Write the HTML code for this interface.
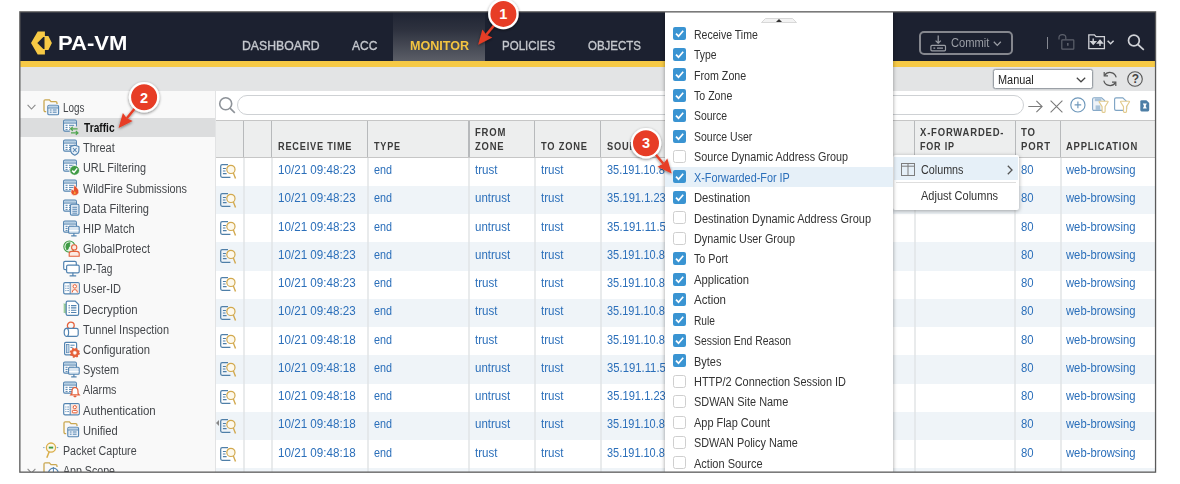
<!DOCTYPE html>
<html lang="en"><head><meta charset="utf-8"><title>PA-VM Monitor Logs</title>
<style>
html,body{margin:0;padding:0;background:#fff;}
body{width:1180px;height:484px;overflow:hidden;position:relative;font-family:"Liberation Sans",sans-serif;}
.t{position:absolute;white-space:nowrap;}
.b{position:absolute;}
svg{position:absolute;overflow:visible;}
#clip{position:absolute;left:0;top:0;width:1180px;height:484px;clip-path:inset(12px 24px 12px 20px);}
#over{position:absolute;left:0;top:0;width:1180px;height:484px;}
</style></head><body>
<div id="clip">
<div class="b" style="left:20px;top:12px;width:1136px;height:49px;background:#1c2130;"></div>
<div class="b" style="left:393px;top:12px;width:92px;height:49px;background:linear-gradient(#1f2433 0%,#2d313e 35%,#5b5e67 100%);"></div>
<div class="b" style="left:20px;top:60.9px;width:1136px;height:6.6px;background:#f6c945;"></div>
<div class="b" style="left:20px;top:67.4px;width:1136px;height:23.6px;background:#e3e4e5;"></div>
<svg style="left:31.4px;top:30.8px" width="21" height="24" viewBox="0 0 21 23.2"><path d="M6.7 0 H13.9 V4.65 H17.4 L20.9 11.6 L17.4 18.55 H13.9 V23.2 H6.7 L0 11.6 Z" fill="#f6c945"/><path d="M6.3 11.6 L12.3 5.6 H13.5 V17.6 H12.3 Z" fill="#1c2130"/></svg>
<div class="t" style="left:57.6px;top:29.4px;font-size:19.4px;line-height:29px;color:#fff;font-weight:bold;transform:scaleX(1.1364);transform-origin:0 50%;">PA-VM</div>
<div class="t" style="left:242.0px;top:36.4px;font-size:13px;line-height:20px;color:#c5c8ce;-webkit-text-stroke:0.35px #c5c8ce;transform:scaleX(0.9423);transform-origin:0 50%;">DASHBOARD</div>
<div class="t" style="left:351.8px;top:36.4px;font-size:13px;line-height:20px;color:#c5c8ce;-webkit-text-stroke:0.35px #c5c8ce;transform:scaleX(0.9254);transform-origin:0 50%;">ACC</div>
<div class="t" style="left:409.8px;top:36.4px;font-size:13px;line-height:20px;color:#f3c440;font-weight:bold;transform:scaleX(0.9682);transform-origin:0 50%;">MONITOR</div>
<div class="t" style="left:501.7px;top:36.4px;font-size:13px;line-height:20px;color:#c5c8ce;-webkit-text-stroke:0.35px #c5c8ce;transform:scaleX(0.8872);transform-origin:0 50%;">POLICIES</div>
<div class="t" style="left:587.6px;top:36.4px;font-size:13px;line-height:20px;color:#c5c8ce;-webkit-text-stroke:0.35px #c5c8ce;transform:scaleX(0.8840);transform-origin:0 50%;">OBJECTS</div>
<div class="b" style="left:919px;top:31.3px;width:93.5px;height:23.5px;border:2px solid #85878e;border-radius:5px;box-sizing:border-box;"></div>
<svg style="left:930px;top:35px" width="17" height="17" viewBox="0 0 17 17" fill="none" stroke="#9b9ea5" stroke-width="1.2"><path d="M8.2 0.5 V8 M5.6 5.6 L8.2 8.2 L10.8 5.6"/><rect x="0.9" y="10.4" width="14.6" height="5.4" rx="1"/><path d="M3.4 13.1 H5.2 M7 13.1 H13"/></svg>
<div class="t" style="left:950.6px;top:34.3px;font-size:12px;line-height:18px;color:#9b9ea5;transform:scaleX(0.9291);transform-origin:0 50%;">Commit</div>
<svg style="left:993px;top:41px" width="9" height="6" viewBox="0 0 9 6" fill="none" stroke="#9b9ea5" stroke-width="1.3"><path d="M0.8 0.8 L4.3 4.4 L7.8 0.8"/></svg>
<div class="b" style="left:1047.2px;top:37.2px;width:1.3px;height:12px;background:#868992;"></div>
<svg style="left:1058px;top:34px" width="17" height="16" viewBox="0 0 17 16" fill="none" stroke="#5d616c" stroke-width="1.2"><path d="M1 5.4 V3.6 Q1 0.7 4.4 0.7 Q7.8 0.7 7.8 3.6 V5.6"/><rect x="3.8" y="5.8" width="12" height="9.4" rx="0.6"/><path d="M9.8 9 V11.8" stroke-width="1.6"/></svg>
<svg style="left:1088px;top:34px" width="27" height="16" viewBox="0 0 27 16" fill="none"><path d="M0.8 0.8 H6.4 L8 2.6 H16.4 V14.6 H0.8 Z" stroke="#d0d2d7" stroke-width="1.3"/><path d="M5.2 4.6 V10 M2.9 7.6 L5.2 10.2 L7.5 7.6 Z M12 12 V6.6 M9.7 9 L12 6.4 L14.3 9 Z" stroke="#d0d2d7" stroke-width="1.4" fill="#d0d2d7"/><path d="M19.6 6.8 L22.6 9.8 L25.6 6.8" stroke="#d0d2d7" stroke-width="1.5"/></svg>
<svg style="left:1127px;top:34px" width="18" height="17" viewBox="0 0 18 17" fill="none" stroke="#d0d2d7" stroke-width="1.7"><circle cx="6.9" cy="6.5" r="5.4"/><path d="M10.9 10.5 L16.8 15.8"/></svg>
<div class="b" style="left:992.6px;top:69.4px;width:100px;height:19.8px;border:1px solid #9ba0a6;border-radius:2.5px;box-sizing:border-box;background:#fff;box-shadow:0 0 0 0.5px #c2c6ca;"></div>
<div class="t" style="left:997.7px;top:70.5px;font-size:12px;line-height:18px;color:#222;transform:scaleX(0.9096);transform-origin:0 50%;">Manual</div>
<svg style="left:1076px;top:77.3px" width="10" height="6" viewBox="0 0 10 6" fill="none" stroke="#444" stroke-width="1.2"><path d="M0.8 0.8 L5 4.8 L9.2 0.8"/></svg>
<svg style="left:1101.5px;top:71px" width="16" height="16" viewBox="0 0 16 16" fill="none" stroke="#555" stroke-width="1.2"><path d="M14.2 6.4 A6.4 6.4 0 0 0 2.6 4.4 M1.8 9.6 A6.4 6.4 0 0 0 13.4 11.6"/><path d="M2.2 1 V4.8 H6 M13.8 15 V11.2 H10" /></svg>
<svg style="left:1127px;top:70.6px" width="16" height="16" viewBox="0 0 16 16" fill="none" stroke="#555" stroke-width="1.1"><circle cx="8" cy="8" r="7.3"/></svg>
<div class="t" style="left:1131.8px;top:70.2px;font-size:12px;line-height:18px;color:#444;font-weight:bold;">?</div>
<div class="b" style="left:20px;top:91px;width:194.6px;height:381px;background:#f9f9f9;"></div>
<div class="b" style="left:214.6px;top:91px;width:1.4px;height:381px;background:#e2e3e4;"></div>
<div class="b" style="left:20px;top:117.8px;width:194.6px;height:19px;background:#dcddde;"></div>
<svg style="left:43.0px;top:98.6px" width="17" height="17" viewBox="0 0 17 17"><path d="M3.2 12.6 H2.4 Q1 12.6 1 11.2 V2.2 Q1 0.8 2.4 0.8 H6.4 L8 2.6 H12.6 Q14 2.6 14 4 V5" fill="none" stroke="#c9a750" stroke-width="1.3"/><rect x="4.8" y="6.2" width="10.8" height="9.6" rx="1.4" fill="#eaf1f8" stroke="#5283b0" stroke-width="1.1"/><rect x="5.4" y="6.8" width="9.6" height="2" fill="#bcd3e7"/><path d="M4.8 9 H15.6" stroke="#5283b0" stroke-width="0.9"/><path d="M6.8 11 H8.6 M9.8 11 H13.6 M6.8 13.2 H8.6 M9.8 13.2 H13.6" stroke="#5283b0" stroke-width="1"/></svg>
<div class="t" style="left:63.4px;top:98.9px;font-size:12px;line-height:18px;color:#44474b;transform:scaleX(0.8224);transform-origin:0 50%;">Logs</div>
<svg style="left:27px;top:104.4px" width="9" height="6" viewBox="0 0 9 6" fill="none" stroke="#8a8a8a" stroke-width="1.1"><path d="M0.6 0.8 L4.5 5 L8.4 0.8"/></svg>
<svg style="left:62.6px;top:118.8px" width="17" height="17" viewBox="0 0 17 17"><rect x="0.6" y="1.1" width="12.8" height="11" rx="1.3" fill="#fff" stroke="#5283b0" stroke-width="1.1"/><rect x="1.2" y="1.7" width="11.6" height="2" fill="#b4cde2"/><path d="M0.6 4.1 H13.4" stroke="#5283b0" stroke-width="1"/><path d="M2.5 6.3 H4.6 M6 6.3 H11.3 M2.5 8.4 H4.6 M6 8.4 H11.3 M2.5 10.4 H4.6 M6 10.4 H9.5" stroke="#5283b0" stroke-width="1"/><rect x="6.8" y="7.4" width="9.5" height="9" fill="#dcdcdc"/><path d="M14.6 9.8 H7.8 M9.8 7.9 L7.6 9.8 L9.8 11.7 M8 13.9 H14.8 M12.8 12 L15 13.9 L12.8 15.8" stroke="#4fa54f" stroke-width="1.15" fill="none"/></svg>
<div class="t" style="left:83.6px;top:119.1px;font-size:12px;line-height:18px;color:#111;font-weight:bold;transform:scaleX(0.8497);transform-origin:0 50%;">Traffic</div>
<svg style="left:62.6px;top:138.9px" width="17" height="17" viewBox="0 0 17 17"><rect x="0.6" y="1.1" width="12.8" height="11" rx="1.3" fill="#fff" stroke="#5283b0" stroke-width="1.1"/><rect x="1.2" y="1.7" width="11.6" height="2" fill="#b4cde2"/><path d="M0.6 4.1 H13.4" stroke="#5283b0" stroke-width="1"/><path d="M2.5 6.3 H4.6 M6 6.3 H11.3 M2.5 8.4 H4.6 M6 8.4 H11.3 M2.5 10.4 H4.6 M6 10.4 H9.5" stroke="#5283b0" stroke-width="1"/><path d="M7.7 7.6 L11.8 6.2 L15.9 7.6 V11.2 Q15.9 14.4 11.8 16.2 Q7.7 14.4 7.7 11.2 Z" fill="#e9f1f8" stroke="#5283b0" stroke-width="1.1"/><path d="M10 9 L13.6 13 M13.6 9 L10 13" stroke="#5283b0" stroke-width="1.1"/></svg>
<div class="t" style="left:83.2px;top:139.2px;font-size:12px;line-height:18px;color:#44474b;transform:scaleX(0.9169);transform-origin:0 50%;">Threat</div>
<svg style="left:62.6px;top:159.1px" width="17" height="17" viewBox="0 0 17 17"><rect x="0.6" y="1.1" width="12.8" height="11" rx="1.3" fill="#fff" stroke="#5283b0" stroke-width="1.1"/><rect x="1.2" y="1.7" width="11.6" height="2" fill="#b4cde2"/><path d="M0.6 4.1 H13.4" stroke="#5283b0" stroke-width="1"/><path d="M2.5 6.3 H4.6 M6 6.3 H11.3 M2.5 8.4 H4.6 M6 8.4 H11.3 M2.5 10.4 H4.6 M6 10.4 H9.5" stroke="#5283b0" stroke-width="1"/><circle cx="11.6" cy="11.4" r="4.9" fill="#3f9b45" stroke="#fff" stroke-width="0.8"/><path d="M9.2 11.6 L11 13.4 L14.2 9.4" stroke="#fff" stroke-width="1.5" fill="none"/></svg>
<div class="t" style="left:83.2px;top:159.4px;font-size:12px;line-height:18px;color:#44474b;transform:scaleX(0.9055);transform-origin:0 50%;">URL Filtering</div>
<svg style="left:62.6px;top:179.3px" width="17" height="17" viewBox="0 0 17 17"><rect x="0.6" y="1.1" width="12.8" height="11" rx="1.3" fill="#fff" stroke="#5283b0" stroke-width="1.1"/><rect x="1.2" y="1.7" width="11.6" height="2" fill="#b4cde2"/><path d="M0.6 4.1 H13.4" stroke="#5283b0" stroke-width="1"/><path d="M2.5 6.3 H4.6 M6 6.3 H11.3 M2.5 8.4 H4.6 M6 8.4 H11.3 M2.5 10.4 H4.6 M6 10.4 H9.5" stroke="#5283b0" stroke-width="1"/><path d="M11.8 5.2 Q12.4 7.6 14.4 9.2 Q16.4 11.2 15.8 13.6 Q14.8 16.5 11.8 16.6 Q8.4 16.5 7.9 13.4 Q7.7 11.6 9.2 9.8 Q9.5 11.2 10.4 11.4 Q10.2 8 11.8 5.2 Z" fill="#e8512e" stroke="#fff" stroke-width="0.6"/><path d="M11.7 12 Q13.2 13.4 12.6 14.8 Q11.7 15.8 10.8 14.8 Q10.4 13.4 11.7 12 Z" fill="#f7a23b"/></svg>
<div class="t" style="left:83.2px;top:179.6px;font-size:12px;line-height:18px;color:#44474b;transform:scaleX(0.9015);transform-origin:0 50%;">WildFire Submissions</div>
<svg style="left:62.6px;top:199.4px" width="17" height="17" viewBox="0 0 17 17"><rect x="0.6" y="1.1" width="12.8" height="11" rx="1.3" fill="#fff" stroke="#5283b0" stroke-width="1.1"/><rect x="1.2" y="1.7" width="11.6" height="2" fill="#b4cde2"/><path d="M0.6 4.1 H13.4" stroke="#5283b0" stroke-width="1"/><path d="M2.5 6.3 H4.6 M6 6.3 H11.3 M2.5 8.4 H4.6 M6 8.4 H11.3 M2.5 10.4 H4.6 M6 10.4 H9.5" stroke="#5283b0" stroke-width="1"/><rect x="7.4" y="5.3" width="8.6" height="10.8" rx="1.4" fill="#dbe7f2" stroke="#5283b0" stroke-width="1.1"/><path d="M9.4 8.3 H14 M9.4 10.3 H14 M9.4 12.3 H14 M9.4 14.2 H14" stroke="#5283b0" stroke-width="0.9"/></svg>
<div class="t" style="left:83.2px;top:199.8px;font-size:12px;line-height:18px;color:#44474b;transform:scaleX(0.9249);transform-origin:0 50%;">Data Filtering</div>
<svg style="left:62.6px;top:219.6px" width="17" height="17" viewBox="0 0 17 17"><rect x="0.6" y="1.1" width="12.8" height="11" rx="1.3" fill="#fff" stroke="#5283b0" stroke-width="1.1"/><rect x="1.2" y="1.7" width="11.6" height="2" fill="#b4cde2"/><path d="M0.6 4.1 H13.4" stroke="#5283b0" stroke-width="1"/><path d="M2.5 6.3 H4.6 M6 6.3 H11.3 M2.5 8.4 H4.6 M6 8.4 H11.3 M2.5 10.4 H4.6 M6 10.4 H9.5" stroke="#5283b0" stroke-width="1"/><rect x="5.6" y="6.2" width="10.6" height="7" rx="1" fill="#dbe7f2" stroke="#5283b0" stroke-width="1.1"/><path d="M10.9 13.2 V15.4 M8.2 15.8 H13.6" stroke="#5283b0" stroke-width="1.2"/><path d="M6.2 10.6 H15.6" stroke="#fff" stroke-width="1"/></svg>
<div class="t" style="left:83.2px;top:219.9px;font-size:12px;line-height:18px;color:#44474b;transform:scaleX(0.9247);transform-origin:0 50%;">HIP Match</div>
<svg style="left:62.6px;top:239.8px" width="17" height="17" viewBox="0 0 17 17"><circle cx="6.4" cy="6.6" r="5.6" fill="#eaf4ea" stroke="#3f9b45" stroke-width="1.1"/><path d="M3 4 Q5 2 7.6 2.4 Q6.4 4.6 7.4 6 Q5.6 7 5.6 9 Q4.6 10.6 3.4 10 Q1.6 7 3 4 Z" fill="#3f9b45"/><circle cx="11.2" cy="7.4" r="2.6" fill="#fbe9e2" stroke="#e5603a" stroke-width="1.1"/><path d="M6.2 16.2 V13.6 Q6.2 11.4 8.6 11.4 H13.8 Q16.2 11.4 16.2 13.6 V16.2 Z" fill="#fbe9e2" stroke="#e5603a" stroke-width="1.1"/></svg>
<div class="t" style="left:83.2px;top:240.1px;font-size:12px;line-height:18px;color:#44474b;transform:scaleX(0.9216);transform-origin:0 50%;">GlobalProtect</div>
<svg style="left:62.6px;top:260.0px" width="17" height="17" viewBox="0 0 17 17"><rect x="0.7" y="1.3" width="12.6" height="8.4" rx="1.4" fill="#fff" stroke="#5283b0" stroke-width="1.2"/><rect x="3.6" y="5.2" width="12.6" height="7.6" rx="1.4" fill="#fff" stroke="#5283b0" stroke-width="1.2"/><path d="M9.9 12.8 V15.4 M6.6 15.8 H13.2" stroke="#5283b0" stroke-width="1.2"/></svg>
<div class="t" style="left:83.2px;top:260.3px;font-size:12px;line-height:18px;color:#44474b;transform:scaleX(0.8477);transform-origin:0 50%;">IP-Tag</div>
<svg style="left:62.6px;top:280.1px" width="17" height="17" viewBox="0 0 17 17"><rect x="0.7" y="2.7" width="15.6" height="11.2" rx="1.4" fill="#fff" stroke="#5283b0" stroke-width="1.2"/><path d="M7.2 2.7 V13.9" stroke="#5283b0" stroke-width="1"/><path d="M2.4 6 H3.4 M4.4 6 H5.8 M2.4 8.3 H3.4 M4.4 8.3 H5.8 M2.4 10.6 H3.4 M4.4 10.6 H5.8" stroke="#5283b0" stroke-width="1"/><rect x="8" y="3.5" width="7.6" height="9.6" fill="#fbe3d9"/><circle cx="11.8" cy="6.4" r="1.7" fill="#fff" stroke="#e5603a" stroke-width="1"/><path d="M9.2 12.4 Q9.2 9.6 11.8 9.6 Q14.4 9.6 14.4 12.4" fill="#fff" stroke="#e5603a" stroke-width="1"/></svg>
<div class="t" style="left:83.2px;top:280.4px;font-size:12px;line-height:18px;color:#44474b;transform:scaleX(0.9194);transform-origin:0 50%;">User-ID</div>
<svg style="left:62.6px;top:300.3px" width="17" height="17" viewBox="0 0 17 17"><path d="M0.6 4 L2.4 5 L0.6 6 L2.4 7 L0.6 8 L2.4 9 L0.6 10 L2.4 11 L0.6 12 L2.4 13 L3.4 13 V4 Z" fill="#a9d3a9" stroke="#7bbf7b" stroke-width="0.6"/><path d="M4.6 1.2 H12.2 L15.6 4.6 V14 Q15.6 15.4 14.2 15.4 H4.6 Q3.2 15.4 3.2 14 V2.6 Q3.2 1.2 4.6 1.2 Z" fill="#fff" stroke="#5283b0" stroke-width="1.2"/><path d="M5.6 5.6 H6.8 M8 5.6 H13.4 M5.6 7.9 H6.8 M8 7.9 H13.4 M5.6 10.2 H6.8 M8 10.2 H13.4 M5.6 12.5 H6.8 M8 12.5 H13.4" stroke="#5283b0" stroke-width="1.1"/></svg>
<div class="t" style="left:83.2px;top:300.6px;font-size:12px;line-height:18px;color:#44474b;transform:scaleX(0.9519);transform-origin:0 50%;">Decryption</div>
<svg style="left:62.6px;top:320.5px" width="17" height="17" viewBox="0 0 17 17"><circle cx="7.8" cy="4.6" r="3.4" fill="none" stroke="#e5603a" stroke-width="1.3"/><path d="M3.6 7.4 H13.4 Q15.2 7.4 15.2 9.2 V13.6 Q15.2 15.4 13.4 15.4 H3.6 Z" fill="#fff" stroke="#5283b0" stroke-width="1.2"/><ellipse cx="3.4" cy="11.4" rx="2.2" ry="4" fill="#fff" stroke="#5283b0" stroke-width="1.2"/></svg>
<div class="t" style="left:83.2px;top:320.8px;font-size:12px;line-height:18px;color:#44474b;transform:scaleX(0.9121);transform-origin:0 50%;">Tunnel Inspection</div>
<svg style="left:62.6px;top:340.6px" width="17" height="17" viewBox="0 0 17 17"><rect x="1.6" y="1.4" width="12" height="12.4" rx="1.3" fill="#fff" stroke="#5283b0" stroke-width="1.2"/><rect x="3.4" y="3.4" width="2.6" height="8.4" fill="#c5d8e9" stroke="#5283b0" stroke-width="0.7"/><path d="M7.4 4.2 H11.6 M7.4 6.4 H9.6" stroke="#5283b0" stroke-width="1"/><circle cx="11.8" cy="11.8" r="4.3" fill="#e5603a" stroke="#e5603a" stroke-width="1.6" stroke-dasharray="1.7 1.7"/><circle cx="11.8" cy="11.8" r="3.6" fill="#e5603a"/><circle cx="11.8" cy="11.8" r="1.7" fill="#fff" stroke="#f6c0ad" stroke-width="0.6"/></svg>
<div class="t" style="left:83.2px;top:340.9px;font-size:12px;line-height:18px;color:#44474b;transform:scaleX(0.9386);transform-origin:0 50%;">Configuration</div>
<svg style="left:62.6px;top:360.8px" width="17" height="17" viewBox="0 0 17 17"><rect x="0.6" y="1.1" width="12.8" height="11" rx="1.3" fill="#fff" stroke="#5283b0" stroke-width="1.1"/><rect x="1.2" y="1.7" width="11.6" height="2" fill="#b4cde2"/><path d="M0.6 4.1 H13.4" stroke="#5283b0" stroke-width="1"/><path d="M2.5 6.3 H4.6 M6 6.3 H11.3 M2.5 8.4 H4.6 M6 8.4 H11.3 M2.5 10.4 H4.6 M6 10.4 H9.5" stroke="#5283b0" stroke-width="1"/><rect x="5.6" y="6.2" width="10.6" height="7" rx="1" fill="#dbe7f2" stroke="#5283b0" stroke-width="1.1"/><path d="M10.9 13.2 V15.4 M8.2 15.8 H13.6" stroke="#5283b0" stroke-width="1.2"/><path d="M6.2 10.6 H15.6" stroke="#fff" stroke-width="1"/></svg>
<div class="t" style="left:83.2px;top:361.1px;font-size:12px;line-height:18px;color:#44474b;transform:scaleX(0.8998);transform-origin:0 50%;">System</div>
<svg style="left:62.6px;top:381.0px" width="17" height="17" viewBox="0 0 17 17"><rect x="0.6" y="1.1" width="12.8" height="11" rx="1.3" fill="#fff" stroke="#5283b0" stroke-width="1.1"/><rect x="1.2" y="1.7" width="11.6" height="2" fill="#b4cde2"/><path d="M0.6 4.1 H13.4" stroke="#5283b0" stroke-width="1"/><path d="M2.5 6.3 H4.6 M6 6.3 H11.3 M2.5 8.4 H4.6 M6 8.4 H11.3 M2.5 10.4 H4.6 M6 10.4 H9.5" stroke="#5283b0" stroke-width="1"/><path d="M12 6.4 Q15 6.8 15 10.4 V12.4 L16.2 13.8 H7.8 L9 12.4 V10.4 Q9 6.8 12 6.4 Z" fill="#fff" stroke="#e5603a" stroke-width="1.2"/><path d="M10.8 15 Q12 16.4 13.2 15" stroke="#e5603a" stroke-width="1.2" fill="none"/></svg>
<div class="t" style="left:83.2px;top:381.3px;font-size:12px;line-height:18px;color:#44474b;transform:scaleX(0.8972);transform-origin:0 50%;">Alarms</div>
<svg style="left:62.6px;top:401.2px" width="17" height="17" viewBox="0 0 17 17"><rect x="0.7" y="2.7" width="15.6" height="11.2" rx="1.4" fill="#fff" stroke="#5283b0" stroke-width="1.2"/><path d="M7.2 2.7 V13.9" stroke="#5283b0" stroke-width="1"/><path d="M2.4 6 H3.4 M4.4 6 H5.8 M2.4 8.3 H3.4 M4.4 8.3 H5.8 M2.4 10.6 H3.4 M4.4 10.6 H5.8" stroke="#5283b0" stroke-width="1"/><rect x="8" y="3.5" width="7.6" height="9.6" fill="#fbe3d9"/><circle cx="11.8" cy="6.2" r="1.6" fill="#fff" stroke="#e5603a" stroke-width="1"/><rect x="9.4" y="9.4" width="4.8" height="2.4" rx="0.8" fill="#fff" stroke="#e5603a" stroke-width="1"/></svg>
<div class="t" style="left:83.2px;top:401.5px;font-size:12px;line-height:18px;color:#44474b;transform:scaleX(0.9559);transform-origin:0 50%;">Authentication</div>
<svg style="left:62.6px;top:421.3px" width="17" height="17" viewBox="0 0 17 17"><path d="M3.2 12.6 H2.4 Q1 12.6 1 11.2 V2.2 Q1 0.8 2.4 0.8 H6.4 L8 2.6 H12.6 Q14 2.6 14 4 V5" fill="none" stroke="#c9a750" stroke-width="1.3"/><rect x="4.8" y="6.2" width="10.8" height="9.6" rx="1.4" fill="#eaf1f8" stroke="#5283b0" stroke-width="1.1"/><rect x="5.4" y="6.8" width="9.6" height="2" fill="#bcd3e7"/><path d="M4.8 9 H15.6" stroke="#5283b0" stroke-width="0.9"/><path d="M6.8 11 H8.6 M9.8 11 H13.6 M6.8 13.2 H8.6 M9.8 13.2 H13.6" stroke="#5283b0" stroke-width="1"/></svg>
<div class="t" style="left:83.2px;top:421.6px;font-size:12px;line-height:18px;color:#44474b;transform:scaleX(0.9290);transform-origin:0 50%;">Unified</div>
<svg style="left:43.0px;top:441.5px" width="17" height="17" viewBox="0 0 17 17"><path d="M0.4 5.6 H2.2 M13.8 5.6 H15.8" stroke="#5283b0" stroke-width="1" stroke-dasharray="1 0.8"/><circle cx="8" cy="5.6" r="4.6" fill="#fdf8e8" stroke="#d9ae4a" stroke-width="1.3"/><path d="M5.8 5.6 H10.2" stroke="#3f9b45" stroke-width="1.9"/><path d="M6.2 9.8 L3.8 15.8" stroke="#d9ae4a" stroke-width="1.5"/></svg>
<div class="t" style="left:63.4px;top:441.8px;font-size:12px;line-height:18px;color:#44474b;transform:scaleX(0.8898);transform-origin:0 50%;">Packet Capture</div>
<svg style="left:43.0px;top:461.7px" width="17" height="17" viewBox="0 0 17 17"><path d="M3.2 12.6 H2.4 Q1 12.6 1 11.2 V2.2 Q1 0.8 2.4 0.8 H6.4 L8 2.6 H12.6 Q14 2.6 14 4 V5" fill="none" stroke="#c9a750" stroke-width="1.3"/><circle cx="10.4" cy="11" r="4.8" fill="#fff" stroke="#5283b0" stroke-width="1.2"/><path d="M10.4 5 V17 M4.4 11 H16.4" stroke="#5283b0" stroke-width="1"/></svg>
<div class="t" style="left:63.4px;top:462.0px;font-size:12px;line-height:18px;color:#44474b;transform:scaleX(0.8857);transform-origin:0 50%;">App Scope</div>
<svg style="left:27px;top:467.5px" width="9" height="6" viewBox="0 0 9 6" fill="none" stroke="#8a8a8a" stroke-width="1.1"><path d="M0.6 0.8 L4.5 5 L8.4 0.8"/></svg>
<div class="b" style="left:216px;top:91px;width:940px;height:381px;background:#fff;"></div>
<svg style="left:218px;top:96px" width="18" height="18" viewBox="0 0 18 18" fill="none" stroke="#8d9298" stroke-width="1.6"><circle cx="7.7" cy="7.8" r="6"/><path d="M12 12.2 L16.8 16.8"/></svg>
<div class="b" style="left:237.2px;top:94.7px;width:786.4px;height:20px;border:1.5px solid #ced1d4;border-radius:10px;box-sizing:border-box;background:#fff;"></div>
<svg style="left:1027.5px;top:99.5px" width="15" height="13" viewBox="0 0 15 13" fill="none" stroke="#7a7a7a" stroke-width="1.1"><path d="M0.3 6.5 H14 M8.4 0.8 L14.1 6.5 L8.4 12.2"/></svg>
<svg style="left:1050px;top:99.5px" width="13" height="13" viewBox="0 0 13 13" fill="none" stroke="#7a7a7a" stroke-width="1.1"><path d="M0.6 0.6 L12.4 12.4 M12.4 0.6 L0.6 12.4"/></svg>
<svg style="left:1070px;top:97.4px" width="16" height="16" viewBox="0 0 16 16" fill="none" stroke="#6f98bb" stroke-width="1.15"><circle cx="7.9" cy="7.9" r="7.1"/><path d="M7.9 4.6 V11.2 M4.6 7.9 H11.2"/></svg>
<svg style="left:1092px;top:96.9px" width="18" height="17" viewBox="0 0 18 17" fill="none"><path d="M2 0.8 H9.6 L12.6 3.6 V12 Q12.6 13.4 11.2 13.4 H2 Q0.6 13.4 0.6 12 V2.2 Q0.6 0.8 2 0.8 Z" stroke="#86a9c8" stroke-width="1.1" fill="#eef3f8"/><rect x="2.8" y="1.2" width="6.6" height="3" fill="#a9c3da"/><rect x="3.6" y="8.4" width="4.6" height="4.6" fill="#a9c3da"/><path d="M7.6 4.2 H15.6 Q16.4 4.2 16.0 5 L13.1 9.6 V14.4 Q13.1 15.3 12.3 15.3 H10.9 Q10.1 15.3 10.1 14.4 V9.6 L7.2 5 Q6.8 4.2 7.6 4.2 Z" fill="#fff" stroke="#e2cb8e" stroke-width="1.15" stroke-linejoin="round"/></svg>
<svg style="left:1114px;top:96.9px" width="18" height="17" viewBox="0 0 18 17" fill="none"><path d="M2 0.8 H8.8 L12.6 4.4 V12 Q12.6 13.4 11.2 13.4 H2 Q0.6 13.4 0.6 12 V2.2 Q0.6 0.8 2 0.8 Z" stroke="#7ea4c4" stroke-width="1.15" fill="#fff"/><path d="M7.0 4.2 H15.0 Q15.8 4.2 15.4 5 L12.5 9.6 V14.4 Q12.5 15.3 11.7 15.3 H10.3 Q9.5 15.3 9.5 14.4 V9.6 L6.6 5 Q6.2 4.2 7.0 4.2 Z" fill="#fff" stroke="#e2cb8e" stroke-width="1.15" stroke-linejoin="round"/></svg>
<svg style="left:1139.5px;top:99.9px" width="10" height="12" viewBox="0 0 10 12"><path d="M1.6 0.3 H6.4 L9.2 3 V10 Q9.2 11.4 7.8 11.4 H1.6 Q0.3 11.4 0.3 10 V1.6 Q0.3 0.3 1.6 0.3 Z" fill="#4d7ea5"/><path d="M2.8 3.6 H6.8 L5.6 6 L6.8 8.4 H2.8 L4 6 Z" fill="#fff"/></svg>
<div class="b" style="left:216px;top:120px;width:940px;height:37.7px;background:#edeeee;border-top:1px solid #c6c6c6;border-bottom:1px solid #c6c6c6;box-sizing:border-box;"></div>
<div class="b" style="left:242.8px;top:121px;width:1.4px;height:35.7px;background:#b7b9bb;"></div>
<div class="b" style="left:270.8px;top:121px;width:1.4px;height:35.7px;background:#b7b9bb;"></div>
<div class="b" style="left:366.8px;top:121px;width:1.4px;height:35.7px;background:#b7b9bb;"></div>
<div class="b" style="left:468.3px;top:121px;width:1.4px;height:35.7px;background:#b7b9bb;"></div>
<div class="b" style="left:534.0px;top:121px;width:1.4px;height:35.7px;background:#b7b9bb;"></div>
<div class="b" style="left:599.8px;top:121px;width:1.4px;height:35.7px;background:#b7b9bb;"></div>
<div class="b" style="left:913.8px;top:121px;width:1.4px;height:35.7px;background:#b7b9bb;"></div>
<div class="b" style="left:1014.6999999999999px;top:121px;width:1.4px;height:35.7px;background:#b7b9bb;"></div>
<div class="b" style="left:1059.8px;top:121px;width:1.4px;height:35.7px;background:#b7b9bb;"></div>
<div class="t" style="left:277.7px;top:138.0px;font-size:10.5px;line-height:16px;color:#3b3b3b;letter-spacing:0.90px;font-weight:bold;transform:scaleX(0.8750);transform-origin:0 50%;">RECEIVE TIME</div>
<div class="t" style="left:373.6px;top:138.0px;font-size:10.5px;line-height:16px;color:#3b3b3b;letter-spacing:0.90px;font-weight:bold;transform:scaleX(0.8631);transform-origin:0 50%;">TYPE</div>
<div class="t" style="left:474.7px;top:124.3px;font-size:10.5px;line-height:16px;color:#3b3b3b;letter-spacing:0.90px;font-weight:bold;transform:scaleX(0.9045);transform-origin:0 50%;">FROM</div>
<div class="t" style="left:474.7px;top:137.6px;font-size:10.5px;line-height:16px;color:#3b3b3b;letter-spacing:0.90px;font-weight:bold;transform:scaleX(0.8975);transform-origin:0 50%;">ZONE</div>
<div class="t" style="left:540.8px;top:138.0px;font-size:10.5px;line-height:16px;color:#3b3b3b;letter-spacing:0.90px;font-weight:bold;transform:scaleX(0.8867);transform-origin:0 50%;">TO ZONE</div>
<div class="t" style="left:606.8px;top:138.0px;font-size:10.5px;line-height:16px;color:#3b3b3b;letter-spacing:0.90px;font-weight:bold;transform:scaleX(0.8822);transform-origin:0 50%;">SOURCE</div>
<div class="t" style="left:920.3px;top:124.3px;font-size:10.5px;line-height:16px;color:#3b3b3b;letter-spacing:0.90px;font-weight:bold;transform:scaleX(0.9023);transform-origin:0 50%;">X-FORWARDED-</div>
<div class="t" style="left:920.3px;top:137.6px;font-size:10.5px;line-height:16px;color:#3b3b3b;letter-spacing:0.90px;font-weight:bold;transform:scaleX(0.8607);transform-origin:0 50%;">FOR IP</div>
<div class="t" style="left:1021.4px;top:124.3px;font-size:10.5px;line-height:16px;color:#3b3b3b;letter-spacing:0.90px;font-weight:bold;transform:scaleX(0.9155);transform-origin:0 50%;">TO</div>
<div class="t" style="left:1021.4px;top:137.6px;font-size:10.5px;line-height:16px;color:#3b3b3b;letter-spacing:0.90px;font-weight:bold;transform:scaleX(0.9100);transform-origin:0 50%;">PORT</div>
<div class="t" style="left:1065.9px;top:138.0px;font-size:10.5px;line-height:16px;color:#3b3b3b;letter-spacing:0.90px;font-weight:bold;transform:scaleX(0.8969);transform-origin:0 50%;">APPLICATION</div>
<div class="b" style="left:242.5px;top:157.50px;width:2px;height:28.25px;background:#e9ebec;"></div>
<div class="b" style="left:270.5px;top:157.50px;width:2px;height:28.25px;background:#e9ebec;"></div>
<div class="b" style="left:366.5px;top:157.50px;width:2px;height:28.25px;background:#e9ebec;"></div>
<div class="b" style="left:468px;top:157.50px;width:2px;height:28.25px;background:#e9ebec;"></div>
<div class="b" style="left:533.7px;top:157.50px;width:2px;height:28.25px;background:#e9ebec;"></div>
<div class="b" style="left:599.5px;top:157.50px;width:2px;height:28.25px;background:#e9ebec;"></div>
<div class="b" style="left:913.5px;top:157.50px;width:2px;height:28.25px;background:#e9ebec;"></div>
<div class="b" style="left:1014.4px;top:157.50px;width:2px;height:28.25px;background:#e9ebec;"></div>
<div class="b" style="left:1059.5px;top:157.50px;width:2px;height:28.25px;background:#e9ebec;"></div>
<svg style="left:220.3px;top:164.4px" width="17" height="16" viewBox="0 0 17 16" fill="none"><path d="M8 0.7 H2.2 Q0.7 0.7 0.7 2.2 V11.8 Q0.7 13.3 2.2 13.3 H10.4" stroke="#4f7fa8" stroke-width="1.25"/><path d="M2.9 4.5 H5.9 M2.9 7 H5.5 M2.9 9.6 H6.6" stroke="#4f7fa8" stroke-width="1.1"/><circle cx="10.9" cy="5.4" r="4.1" fill="#fdf8ea" stroke="#d2a94e" stroke-width="1.2"/><path d="M13.3 8.8 L15.5 14.4" stroke="#d2a94e" stroke-width="1.4"/></svg>
<div class="t" style="left:277.7px;top:161.1px;font-size:12px;line-height:18px;color:#2b6fba;transform:scaleX(0.9691);transform-origin:0 50%;">10/21 09:48:23</div>
<div class="t" style="left:373.6px;top:161.1px;font-size:12px;line-height:18px;color:#2b6fba;transform:scaleX(0.8990);transform-origin:0 50%;">end</div>
<div class="t" style="left:474.7px;top:161.1px;font-size:12px;line-height:18px;color:#2b6fba;transform:scaleX(0.9641);transform-origin:0 50%;">trust</div>
<div class="t" style="left:540.6px;top:161.1px;font-size:12px;line-height:18px;color:#2b6fba;transform:scaleX(0.9641);transform-origin:0 50%;">trust</div>
<div class="t" style="left:606.8px;top:161.1px;font-size:12px;line-height:18px;color:#2b6fba;transform:scaleX(0.9118);transform-origin:0 50%;">35.191.10.8</div>
<div class="t" style="left:1021.4px;top:161.1px;font-size:12px;line-height:18px;color:#2b6fba;transform:scaleX(0.9440);transform-origin:0 50%;">80</div>
<div class="t" style="left:1065.8px;top:161.1px;font-size:12px;line-height:18px;color:#2b6fba;transform:scaleX(0.9374);transform-origin:0 50%;">web-browsing</div>
<div class="b" style="left:216px;top:185.75px;width:940px;height:28.25px;background:#eff4f8;"></div>
<div class="b" style="left:242.5px;top:185.75px;width:2px;height:28.25px;background:#e4e8eb;"></div>
<div class="b" style="left:270.5px;top:185.75px;width:2px;height:28.25px;background:#e4e8eb;"></div>
<div class="b" style="left:366.5px;top:185.75px;width:2px;height:28.25px;background:#e4e8eb;"></div>
<div class="b" style="left:468px;top:185.75px;width:2px;height:28.25px;background:#e4e8eb;"></div>
<div class="b" style="left:533.7px;top:185.75px;width:2px;height:28.25px;background:#e4e8eb;"></div>
<div class="b" style="left:599.5px;top:185.75px;width:2px;height:28.25px;background:#e4e8eb;"></div>
<div class="b" style="left:913.5px;top:185.75px;width:2px;height:28.25px;background:#e4e8eb;"></div>
<div class="b" style="left:1014.4px;top:185.75px;width:2px;height:28.25px;background:#e4e8eb;"></div>
<div class="b" style="left:1059.5px;top:185.75px;width:2px;height:28.25px;background:#e4e8eb;"></div>
<svg style="left:220.3px;top:192.6px" width="17" height="16" viewBox="0 0 17 16" fill="none"><path d="M8 0.7 H2.2 Q0.7 0.7 0.7 2.2 V11.8 Q0.7 13.3 2.2 13.3 H10.4" stroke="#4f7fa8" stroke-width="1.25"/><path d="M2.9 4.5 H5.9 M2.9 7 H5.5 M2.9 9.6 H6.6" stroke="#4f7fa8" stroke-width="1.1"/><circle cx="10.9" cy="5.4" r="4.1" fill="#fdf8ea" stroke="#d2a94e" stroke-width="1.2"/><path d="M13.3 8.8 L15.5 14.4" stroke="#d2a94e" stroke-width="1.4"/></svg>
<div class="t" style="left:277.7px;top:189.3px;font-size:12px;line-height:18px;color:#2b6fba;transform:scaleX(0.9691);transform-origin:0 50%;">10/21 09:48:23</div>
<div class="t" style="left:373.6px;top:189.3px;font-size:12px;line-height:18px;color:#2b6fba;transform:scaleX(0.8990);transform-origin:0 50%;">end</div>
<div class="t" style="left:474.7px;top:189.3px;font-size:12px;line-height:18px;color:#2b6fba;transform:scaleX(0.9568);transform-origin:0 50%;">untrust</div>
<div class="t" style="left:540.6px;top:189.3px;font-size:12px;line-height:18px;color:#2b6fba;transform:scaleX(0.9641);transform-origin:0 50%;">trust</div>
<div class="t" style="left:606.8px;top:189.3px;font-size:12px;line-height:18px;color:#2b6fba;transform:scaleX(0.9275);transform-origin:0 50%;">35.191.1.23</div>
<div class="t" style="left:1021.4px;top:189.3px;font-size:12px;line-height:18px;color:#2b6fba;transform:scaleX(0.9440);transform-origin:0 50%;">80</div>
<div class="t" style="left:1065.8px;top:189.3px;font-size:12px;line-height:18px;color:#2b6fba;transform:scaleX(0.9374);transform-origin:0 50%;">web-browsing</div>
<div class="b" style="left:242.5px;top:214.00px;width:2px;height:28.25px;background:#e9ebec;"></div>
<div class="b" style="left:270.5px;top:214.00px;width:2px;height:28.25px;background:#e9ebec;"></div>
<div class="b" style="left:366.5px;top:214.00px;width:2px;height:28.25px;background:#e9ebec;"></div>
<div class="b" style="left:468px;top:214.00px;width:2px;height:28.25px;background:#e9ebec;"></div>
<div class="b" style="left:533.7px;top:214.00px;width:2px;height:28.25px;background:#e9ebec;"></div>
<div class="b" style="left:599.5px;top:214.00px;width:2px;height:28.25px;background:#e9ebec;"></div>
<div class="b" style="left:913.5px;top:214.00px;width:2px;height:28.25px;background:#e9ebec;"></div>
<div class="b" style="left:1014.4px;top:214.00px;width:2px;height:28.25px;background:#e9ebec;"></div>
<div class="b" style="left:1059.5px;top:214.00px;width:2px;height:28.25px;background:#e9ebec;"></div>
<svg style="left:220.3px;top:220.9px" width="17" height="16" viewBox="0 0 17 16" fill="none"><path d="M8 0.7 H2.2 Q0.7 0.7 0.7 2.2 V11.8 Q0.7 13.3 2.2 13.3 H10.4" stroke="#4f7fa8" stroke-width="1.25"/><path d="M2.9 4.5 H5.9 M2.9 7 H5.5 M2.9 9.6 H6.6" stroke="#4f7fa8" stroke-width="1.1"/><circle cx="10.9" cy="5.4" r="4.1" fill="#fdf8ea" stroke="#d2a94e" stroke-width="1.2"/><path d="M13.3 8.8 L15.5 14.4" stroke="#d2a94e" stroke-width="1.4"/></svg>
<div class="t" style="left:277.7px;top:217.6px;font-size:12px;line-height:18px;color:#2b6fba;transform:scaleX(0.9691);transform-origin:0 50%;">10/21 09:48:23</div>
<div class="t" style="left:373.6px;top:217.6px;font-size:12px;line-height:18px;color:#2b6fba;transform:scaleX(0.8990);transform-origin:0 50%;">end</div>
<div class="t" style="left:474.7px;top:217.6px;font-size:12px;line-height:18px;color:#2b6fba;transform:scaleX(0.9568);transform-origin:0 50%;">untrust</div>
<div class="t" style="left:540.6px;top:217.6px;font-size:12px;line-height:18px;color:#2b6fba;transform:scaleX(0.9641);transform-origin:0 50%;">trust</div>
<div class="t" style="left:606.8px;top:217.6px;font-size:12px;line-height:18px;color:#2b6fba;transform:scaleX(0.9408);transform-origin:0 50%;">35.191.11.5</div>
<div class="t" style="left:1021.4px;top:217.6px;font-size:12px;line-height:18px;color:#2b6fba;transform:scaleX(0.9440);transform-origin:0 50%;">80</div>
<div class="t" style="left:1065.8px;top:217.6px;font-size:12px;line-height:18px;color:#2b6fba;transform:scaleX(0.9374);transform-origin:0 50%;">web-browsing</div>
<div class="b" style="left:216px;top:242.25px;width:940px;height:28.25px;background:#eff4f8;"></div>
<div class="b" style="left:242.5px;top:242.25px;width:2px;height:28.25px;background:#e4e8eb;"></div>
<div class="b" style="left:270.5px;top:242.25px;width:2px;height:28.25px;background:#e4e8eb;"></div>
<div class="b" style="left:366.5px;top:242.25px;width:2px;height:28.25px;background:#e4e8eb;"></div>
<div class="b" style="left:468px;top:242.25px;width:2px;height:28.25px;background:#e4e8eb;"></div>
<div class="b" style="left:533.7px;top:242.25px;width:2px;height:28.25px;background:#e4e8eb;"></div>
<div class="b" style="left:599.5px;top:242.25px;width:2px;height:28.25px;background:#e4e8eb;"></div>
<div class="b" style="left:913.5px;top:242.25px;width:2px;height:28.25px;background:#e4e8eb;"></div>
<div class="b" style="left:1014.4px;top:242.25px;width:2px;height:28.25px;background:#e4e8eb;"></div>
<div class="b" style="left:1059.5px;top:242.25px;width:2px;height:28.25px;background:#e4e8eb;"></div>
<svg style="left:220.3px;top:249.2px" width="17" height="16" viewBox="0 0 17 16" fill="none"><path d="M8 0.7 H2.2 Q0.7 0.7 0.7 2.2 V11.8 Q0.7 13.3 2.2 13.3 H10.4" stroke="#4f7fa8" stroke-width="1.25"/><path d="M2.9 4.5 H5.9 M2.9 7 H5.5 M2.9 9.6 H6.6" stroke="#4f7fa8" stroke-width="1.1"/><circle cx="10.9" cy="5.4" r="4.1" fill="#fdf8ea" stroke="#d2a94e" stroke-width="1.2"/><path d="M13.3 8.8 L15.5 14.4" stroke="#d2a94e" stroke-width="1.4"/></svg>
<div class="t" style="left:277.7px;top:245.8px;font-size:12px;line-height:18px;color:#2b6fba;transform:scaleX(0.9691);transform-origin:0 50%;">10/21 09:48:23</div>
<div class="t" style="left:373.6px;top:245.8px;font-size:12px;line-height:18px;color:#2b6fba;transform:scaleX(0.8990);transform-origin:0 50%;">end</div>
<div class="t" style="left:474.7px;top:245.8px;font-size:12px;line-height:18px;color:#2b6fba;transform:scaleX(0.9568);transform-origin:0 50%;">untrust</div>
<div class="t" style="left:540.6px;top:245.8px;font-size:12px;line-height:18px;color:#2b6fba;transform:scaleX(0.9641);transform-origin:0 50%;">trust</div>
<div class="t" style="left:606.8px;top:245.8px;font-size:12px;line-height:18px;color:#2b6fba;transform:scaleX(0.9118);transform-origin:0 50%;">35.191.10.8</div>
<div class="t" style="left:1021.4px;top:245.8px;font-size:12px;line-height:18px;color:#2b6fba;transform:scaleX(0.9440);transform-origin:0 50%;">80</div>
<div class="t" style="left:1065.8px;top:245.8px;font-size:12px;line-height:18px;color:#2b6fba;transform:scaleX(0.9374);transform-origin:0 50%;">web-browsing</div>
<div class="b" style="left:242.5px;top:270.50px;width:2px;height:28.25px;background:#e9ebec;"></div>
<div class="b" style="left:270.5px;top:270.50px;width:2px;height:28.25px;background:#e9ebec;"></div>
<div class="b" style="left:366.5px;top:270.50px;width:2px;height:28.25px;background:#e9ebec;"></div>
<div class="b" style="left:468px;top:270.50px;width:2px;height:28.25px;background:#e9ebec;"></div>
<div class="b" style="left:533.7px;top:270.50px;width:2px;height:28.25px;background:#e9ebec;"></div>
<div class="b" style="left:599.5px;top:270.50px;width:2px;height:28.25px;background:#e9ebec;"></div>
<div class="b" style="left:913.5px;top:270.50px;width:2px;height:28.25px;background:#e9ebec;"></div>
<div class="b" style="left:1014.4px;top:270.50px;width:2px;height:28.25px;background:#e9ebec;"></div>
<div class="b" style="left:1059.5px;top:270.50px;width:2px;height:28.25px;background:#e9ebec;"></div>
<svg style="left:220.3px;top:277.4px" width="17" height="16" viewBox="0 0 17 16" fill="none"><path d="M8 0.7 H2.2 Q0.7 0.7 0.7 2.2 V11.8 Q0.7 13.3 2.2 13.3 H10.4" stroke="#4f7fa8" stroke-width="1.25"/><path d="M2.9 4.5 H5.9 M2.9 7 H5.5 M2.9 9.6 H6.6" stroke="#4f7fa8" stroke-width="1.1"/><circle cx="10.9" cy="5.4" r="4.1" fill="#fdf8ea" stroke="#d2a94e" stroke-width="1.2"/><path d="M13.3 8.8 L15.5 14.4" stroke="#d2a94e" stroke-width="1.4"/></svg>
<div class="t" style="left:277.7px;top:274.1px;font-size:12px;line-height:18px;color:#2b6fba;transform:scaleX(0.9691);transform-origin:0 50%;">10/21 09:48:23</div>
<div class="t" style="left:373.6px;top:274.1px;font-size:12px;line-height:18px;color:#2b6fba;transform:scaleX(0.8990);transform-origin:0 50%;">end</div>
<div class="t" style="left:474.7px;top:274.1px;font-size:12px;line-height:18px;color:#2b6fba;transform:scaleX(0.9641);transform-origin:0 50%;">trust</div>
<div class="t" style="left:540.6px;top:274.1px;font-size:12px;line-height:18px;color:#2b6fba;transform:scaleX(0.9641);transform-origin:0 50%;">trust</div>
<div class="t" style="left:606.8px;top:274.1px;font-size:12px;line-height:18px;color:#2b6fba;transform:scaleX(0.9118);transform-origin:0 50%;">35.191.10.8</div>
<div class="t" style="left:1021.4px;top:274.1px;font-size:12px;line-height:18px;color:#2b6fba;transform:scaleX(0.9440);transform-origin:0 50%;">80</div>
<div class="t" style="left:1065.8px;top:274.1px;font-size:12px;line-height:18px;color:#2b6fba;transform:scaleX(0.9374);transform-origin:0 50%;">web-browsing</div>
<div class="b" style="left:216px;top:298.75px;width:940px;height:28.25px;background:#eff4f8;"></div>
<div class="b" style="left:242.5px;top:298.75px;width:2px;height:28.25px;background:#e4e8eb;"></div>
<div class="b" style="left:270.5px;top:298.75px;width:2px;height:28.25px;background:#e4e8eb;"></div>
<div class="b" style="left:366.5px;top:298.75px;width:2px;height:28.25px;background:#e4e8eb;"></div>
<div class="b" style="left:468px;top:298.75px;width:2px;height:28.25px;background:#e4e8eb;"></div>
<div class="b" style="left:533.7px;top:298.75px;width:2px;height:28.25px;background:#e4e8eb;"></div>
<div class="b" style="left:599.5px;top:298.75px;width:2px;height:28.25px;background:#e4e8eb;"></div>
<div class="b" style="left:913.5px;top:298.75px;width:2px;height:28.25px;background:#e4e8eb;"></div>
<div class="b" style="left:1014.4px;top:298.75px;width:2px;height:28.25px;background:#e4e8eb;"></div>
<div class="b" style="left:1059.5px;top:298.75px;width:2px;height:28.25px;background:#e4e8eb;"></div>
<svg style="left:220.3px;top:305.7px" width="17" height="16" viewBox="0 0 17 16" fill="none"><path d="M8 0.7 H2.2 Q0.7 0.7 0.7 2.2 V11.8 Q0.7 13.3 2.2 13.3 H10.4" stroke="#4f7fa8" stroke-width="1.25"/><path d="M2.9 4.5 H5.9 M2.9 7 H5.5 M2.9 9.6 H6.6" stroke="#4f7fa8" stroke-width="1.1"/><circle cx="10.9" cy="5.4" r="4.1" fill="#fdf8ea" stroke="#d2a94e" stroke-width="1.2"/><path d="M13.3 8.8 L15.5 14.4" stroke="#d2a94e" stroke-width="1.4"/></svg>
<div class="t" style="left:277.7px;top:302.4px;font-size:12px;line-height:18px;color:#2b6fba;transform:scaleX(0.9691);transform-origin:0 50%;">10/21 09:48:23</div>
<div class="t" style="left:373.6px;top:302.4px;font-size:12px;line-height:18px;color:#2b6fba;transform:scaleX(0.8990);transform-origin:0 50%;">end</div>
<div class="t" style="left:474.7px;top:302.4px;font-size:12px;line-height:18px;color:#2b6fba;transform:scaleX(0.9641);transform-origin:0 50%;">trust</div>
<div class="t" style="left:540.6px;top:302.4px;font-size:12px;line-height:18px;color:#2b6fba;transform:scaleX(0.9641);transform-origin:0 50%;">trust</div>
<div class="t" style="left:606.8px;top:302.4px;font-size:12px;line-height:18px;color:#2b6fba;transform:scaleX(0.9118);transform-origin:0 50%;">35.191.10.8</div>
<div class="t" style="left:1021.4px;top:302.4px;font-size:12px;line-height:18px;color:#2b6fba;transform:scaleX(0.9440);transform-origin:0 50%;">80</div>
<div class="t" style="left:1065.8px;top:302.4px;font-size:12px;line-height:18px;color:#2b6fba;transform:scaleX(0.9374);transform-origin:0 50%;">web-browsing</div>
<div class="b" style="left:242.5px;top:327.00px;width:2px;height:28.25px;background:#e9ebec;"></div>
<div class="b" style="left:270.5px;top:327.00px;width:2px;height:28.25px;background:#e9ebec;"></div>
<div class="b" style="left:366.5px;top:327.00px;width:2px;height:28.25px;background:#e9ebec;"></div>
<div class="b" style="left:468px;top:327.00px;width:2px;height:28.25px;background:#e9ebec;"></div>
<div class="b" style="left:533.7px;top:327.00px;width:2px;height:28.25px;background:#e9ebec;"></div>
<div class="b" style="left:599.5px;top:327.00px;width:2px;height:28.25px;background:#e9ebec;"></div>
<div class="b" style="left:913.5px;top:327.00px;width:2px;height:28.25px;background:#e9ebec;"></div>
<div class="b" style="left:1014.4px;top:327.00px;width:2px;height:28.25px;background:#e9ebec;"></div>
<div class="b" style="left:1059.5px;top:327.00px;width:2px;height:28.25px;background:#e9ebec;"></div>
<svg style="left:220.3px;top:333.9px" width="17" height="16" viewBox="0 0 17 16" fill="none"><path d="M8 0.7 H2.2 Q0.7 0.7 0.7 2.2 V11.8 Q0.7 13.3 2.2 13.3 H10.4" stroke="#4f7fa8" stroke-width="1.25"/><path d="M2.9 4.5 H5.9 M2.9 7 H5.5 M2.9 9.6 H6.6" stroke="#4f7fa8" stroke-width="1.1"/><circle cx="10.9" cy="5.4" r="4.1" fill="#fdf8ea" stroke="#d2a94e" stroke-width="1.2"/><path d="M13.3 8.8 L15.5 14.4" stroke="#d2a94e" stroke-width="1.4"/></svg>
<div class="t" style="left:277.7px;top:330.6px;font-size:12px;line-height:18px;color:#2b6fba;transform:scaleX(0.9691);transform-origin:0 50%;">10/21 09:48:18</div>
<div class="t" style="left:373.6px;top:330.6px;font-size:12px;line-height:18px;color:#2b6fba;transform:scaleX(0.8990);transform-origin:0 50%;">end</div>
<div class="t" style="left:474.7px;top:330.6px;font-size:12px;line-height:18px;color:#2b6fba;transform:scaleX(0.9641);transform-origin:0 50%;">trust</div>
<div class="t" style="left:540.6px;top:330.6px;font-size:12px;line-height:18px;color:#2b6fba;transform:scaleX(0.9641);transform-origin:0 50%;">trust</div>
<div class="t" style="left:606.8px;top:330.6px;font-size:12px;line-height:18px;color:#2b6fba;transform:scaleX(0.9118);transform-origin:0 50%;">35.191.10.8</div>
<div class="t" style="left:1021.4px;top:330.6px;font-size:12px;line-height:18px;color:#2b6fba;transform:scaleX(0.9440);transform-origin:0 50%;">80</div>
<div class="t" style="left:1065.8px;top:330.6px;font-size:12px;line-height:18px;color:#2b6fba;transform:scaleX(0.9374);transform-origin:0 50%;">web-browsing</div>
<div class="b" style="left:216px;top:355.25px;width:940px;height:28.25px;background:#eff4f8;"></div>
<div class="b" style="left:242.5px;top:355.25px;width:2px;height:28.25px;background:#e4e8eb;"></div>
<div class="b" style="left:270.5px;top:355.25px;width:2px;height:28.25px;background:#e4e8eb;"></div>
<div class="b" style="left:366.5px;top:355.25px;width:2px;height:28.25px;background:#e4e8eb;"></div>
<div class="b" style="left:468px;top:355.25px;width:2px;height:28.25px;background:#e4e8eb;"></div>
<div class="b" style="left:533.7px;top:355.25px;width:2px;height:28.25px;background:#e4e8eb;"></div>
<div class="b" style="left:599.5px;top:355.25px;width:2px;height:28.25px;background:#e4e8eb;"></div>
<div class="b" style="left:913.5px;top:355.25px;width:2px;height:28.25px;background:#e4e8eb;"></div>
<div class="b" style="left:1014.4px;top:355.25px;width:2px;height:28.25px;background:#e4e8eb;"></div>
<div class="b" style="left:1059.5px;top:355.25px;width:2px;height:28.25px;background:#e4e8eb;"></div>
<svg style="left:220.3px;top:362.2px" width="17" height="16" viewBox="0 0 17 16" fill="none"><path d="M8 0.7 H2.2 Q0.7 0.7 0.7 2.2 V11.8 Q0.7 13.3 2.2 13.3 H10.4" stroke="#4f7fa8" stroke-width="1.25"/><path d="M2.9 4.5 H5.9 M2.9 7 H5.5 M2.9 9.6 H6.6" stroke="#4f7fa8" stroke-width="1.1"/><circle cx="10.9" cy="5.4" r="4.1" fill="#fdf8ea" stroke="#d2a94e" stroke-width="1.2"/><path d="M13.3 8.8 L15.5 14.4" stroke="#d2a94e" stroke-width="1.4"/></svg>
<div class="t" style="left:277.7px;top:358.9px;font-size:12px;line-height:18px;color:#2b6fba;transform:scaleX(0.9691);transform-origin:0 50%;">10/21 09:48:18</div>
<div class="t" style="left:373.6px;top:358.9px;font-size:12px;line-height:18px;color:#2b6fba;transform:scaleX(0.8990);transform-origin:0 50%;">end</div>
<div class="t" style="left:474.7px;top:358.9px;font-size:12px;line-height:18px;color:#2b6fba;transform:scaleX(0.9568);transform-origin:0 50%;">untrust</div>
<div class="t" style="left:540.6px;top:358.9px;font-size:12px;line-height:18px;color:#2b6fba;transform:scaleX(0.9641);transform-origin:0 50%;">trust</div>
<div class="t" style="left:606.8px;top:358.9px;font-size:12px;line-height:18px;color:#2b6fba;transform:scaleX(0.9408);transform-origin:0 50%;">35.191.11.5</div>
<div class="t" style="left:1021.4px;top:358.9px;font-size:12px;line-height:18px;color:#2b6fba;transform:scaleX(0.9440);transform-origin:0 50%;">80</div>
<div class="t" style="left:1065.8px;top:358.9px;font-size:12px;line-height:18px;color:#2b6fba;transform:scaleX(0.9374);transform-origin:0 50%;">web-browsing</div>
<div class="b" style="left:242.5px;top:383.50px;width:2px;height:28.25px;background:#e9ebec;"></div>
<div class="b" style="left:270.5px;top:383.50px;width:2px;height:28.25px;background:#e9ebec;"></div>
<div class="b" style="left:366.5px;top:383.50px;width:2px;height:28.25px;background:#e9ebec;"></div>
<div class="b" style="left:468px;top:383.50px;width:2px;height:28.25px;background:#e9ebec;"></div>
<div class="b" style="left:533.7px;top:383.50px;width:2px;height:28.25px;background:#e9ebec;"></div>
<div class="b" style="left:599.5px;top:383.50px;width:2px;height:28.25px;background:#e9ebec;"></div>
<div class="b" style="left:913.5px;top:383.50px;width:2px;height:28.25px;background:#e9ebec;"></div>
<div class="b" style="left:1014.4px;top:383.50px;width:2px;height:28.25px;background:#e9ebec;"></div>
<div class="b" style="left:1059.5px;top:383.50px;width:2px;height:28.25px;background:#e9ebec;"></div>
<svg style="left:220.3px;top:390.4px" width="17" height="16" viewBox="0 0 17 16" fill="none"><path d="M8 0.7 H2.2 Q0.7 0.7 0.7 2.2 V11.8 Q0.7 13.3 2.2 13.3 H10.4" stroke="#4f7fa8" stroke-width="1.25"/><path d="M2.9 4.5 H5.9 M2.9 7 H5.5 M2.9 9.6 H6.6" stroke="#4f7fa8" stroke-width="1.1"/><circle cx="10.9" cy="5.4" r="4.1" fill="#fdf8ea" stroke="#d2a94e" stroke-width="1.2"/><path d="M13.3 8.8 L15.5 14.4" stroke="#d2a94e" stroke-width="1.4"/></svg>
<div class="t" style="left:277.7px;top:387.1px;font-size:12px;line-height:18px;color:#2b6fba;transform:scaleX(0.9691);transform-origin:0 50%;">10/21 09:48:18</div>
<div class="t" style="left:373.6px;top:387.1px;font-size:12px;line-height:18px;color:#2b6fba;transform:scaleX(0.8990);transform-origin:0 50%;">end</div>
<div class="t" style="left:474.7px;top:387.1px;font-size:12px;line-height:18px;color:#2b6fba;transform:scaleX(0.9568);transform-origin:0 50%;">untrust</div>
<div class="t" style="left:540.6px;top:387.1px;font-size:12px;line-height:18px;color:#2b6fba;transform:scaleX(0.9641);transform-origin:0 50%;">trust</div>
<div class="t" style="left:606.8px;top:387.1px;font-size:12px;line-height:18px;color:#2b6fba;transform:scaleX(0.9275);transform-origin:0 50%;">35.191.1.23</div>
<div class="t" style="left:1021.4px;top:387.1px;font-size:12px;line-height:18px;color:#2b6fba;transform:scaleX(0.9440);transform-origin:0 50%;">80</div>
<div class="t" style="left:1065.8px;top:387.1px;font-size:12px;line-height:18px;color:#2b6fba;transform:scaleX(0.9374);transform-origin:0 50%;">web-browsing</div>
<div class="b" style="left:216px;top:411.75px;width:940px;height:28.25px;background:#eff4f8;"></div>
<div class="b" style="left:242.5px;top:411.75px;width:2px;height:28.25px;background:#e4e8eb;"></div>
<div class="b" style="left:270.5px;top:411.75px;width:2px;height:28.25px;background:#e4e8eb;"></div>
<div class="b" style="left:366.5px;top:411.75px;width:2px;height:28.25px;background:#e4e8eb;"></div>
<div class="b" style="left:468px;top:411.75px;width:2px;height:28.25px;background:#e4e8eb;"></div>
<div class="b" style="left:533.7px;top:411.75px;width:2px;height:28.25px;background:#e4e8eb;"></div>
<div class="b" style="left:599.5px;top:411.75px;width:2px;height:28.25px;background:#e4e8eb;"></div>
<div class="b" style="left:913.5px;top:411.75px;width:2px;height:28.25px;background:#e4e8eb;"></div>
<div class="b" style="left:1014.4px;top:411.75px;width:2px;height:28.25px;background:#e4e8eb;"></div>
<div class="b" style="left:1059.5px;top:411.75px;width:2px;height:28.25px;background:#e4e8eb;"></div>
<svg style="left:220.3px;top:418.7px" width="17" height="16" viewBox="0 0 17 16" fill="none"><path d="M8 0.7 H2.2 Q0.7 0.7 0.7 2.2 V11.8 Q0.7 13.3 2.2 13.3 H10.4" stroke="#4f7fa8" stroke-width="1.25"/><path d="M2.9 4.5 H5.9 M2.9 7 H5.5 M2.9 9.6 H6.6" stroke="#4f7fa8" stroke-width="1.1"/><circle cx="10.9" cy="5.4" r="4.1" fill="#fdf8ea" stroke="#d2a94e" stroke-width="1.2"/><path d="M13.3 8.8 L15.5 14.4" stroke="#d2a94e" stroke-width="1.4"/></svg>
<div class="t" style="left:277.7px;top:415.4px;font-size:12px;line-height:18px;color:#2b6fba;transform:scaleX(0.9691);transform-origin:0 50%;">10/21 09:48:18</div>
<div class="t" style="left:373.6px;top:415.4px;font-size:12px;line-height:18px;color:#2b6fba;transform:scaleX(0.8990);transform-origin:0 50%;">end</div>
<div class="t" style="left:474.7px;top:415.4px;font-size:12px;line-height:18px;color:#2b6fba;transform:scaleX(0.9568);transform-origin:0 50%;">untrust</div>
<div class="t" style="left:540.6px;top:415.4px;font-size:12px;line-height:18px;color:#2b6fba;transform:scaleX(0.9641);transform-origin:0 50%;">trust</div>
<div class="t" style="left:606.8px;top:415.4px;font-size:12px;line-height:18px;color:#2b6fba;transform:scaleX(0.9118);transform-origin:0 50%;">35.191.10.8</div>
<div class="t" style="left:1021.4px;top:415.4px;font-size:12px;line-height:18px;color:#2b6fba;transform:scaleX(0.9440);transform-origin:0 50%;">80</div>
<div class="t" style="left:1065.8px;top:415.4px;font-size:12px;line-height:18px;color:#2b6fba;transform:scaleX(0.9374);transform-origin:0 50%;">web-browsing</div>
<div class="b" style="left:242.5px;top:440.00px;width:2px;height:28.25px;background:#e9ebec;"></div>
<div class="b" style="left:270.5px;top:440.00px;width:2px;height:28.25px;background:#e9ebec;"></div>
<div class="b" style="left:366.5px;top:440.00px;width:2px;height:28.25px;background:#e9ebec;"></div>
<div class="b" style="left:468px;top:440.00px;width:2px;height:28.25px;background:#e9ebec;"></div>
<div class="b" style="left:533.7px;top:440.00px;width:2px;height:28.25px;background:#e9ebec;"></div>
<div class="b" style="left:599.5px;top:440.00px;width:2px;height:28.25px;background:#e9ebec;"></div>
<div class="b" style="left:913.5px;top:440.00px;width:2px;height:28.25px;background:#e9ebec;"></div>
<div class="b" style="left:1014.4px;top:440.00px;width:2px;height:28.25px;background:#e9ebec;"></div>
<div class="b" style="left:1059.5px;top:440.00px;width:2px;height:28.25px;background:#e9ebec;"></div>
<svg style="left:220.3px;top:446.9px" width="17" height="16" viewBox="0 0 17 16" fill="none"><path d="M8 0.7 H2.2 Q0.7 0.7 0.7 2.2 V11.8 Q0.7 13.3 2.2 13.3 H10.4" stroke="#4f7fa8" stroke-width="1.25"/><path d="M2.9 4.5 H5.9 M2.9 7 H5.5 M2.9 9.6 H6.6" stroke="#4f7fa8" stroke-width="1.1"/><circle cx="10.9" cy="5.4" r="4.1" fill="#fdf8ea" stroke="#d2a94e" stroke-width="1.2"/><path d="M13.3 8.8 L15.5 14.4" stroke="#d2a94e" stroke-width="1.4"/></svg>
<div class="t" style="left:277.7px;top:443.6px;font-size:12px;line-height:18px;color:#2b6fba;transform:scaleX(0.9691);transform-origin:0 50%;">10/21 09:48:18</div>
<div class="t" style="left:373.6px;top:443.6px;font-size:12px;line-height:18px;color:#2b6fba;transform:scaleX(0.8990);transform-origin:0 50%;">end</div>
<div class="t" style="left:474.7px;top:443.6px;font-size:12px;line-height:18px;color:#2b6fba;transform:scaleX(0.9641);transform-origin:0 50%;">trust</div>
<div class="t" style="left:540.6px;top:443.6px;font-size:12px;line-height:18px;color:#2b6fba;transform:scaleX(0.9641);transform-origin:0 50%;">trust</div>
<div class="t" style="left:606.8px;top:443.6px;font-size:12px;line-height:18px;color:#2b6fba;transform:scaleX(0.9118);transform-origin:0 50%;">35.191.10.8</div>
<div class="t" style="left:1021.4px;top:443.6px;font-size:12px;line-height:18px;color:#2b6fba;transform:scaleX(0.9440);transform-origin:0 50%;">80</div>
<div class="t" style="left:1065.8px;top:443.6px;font-size:12px;line-height:18px;color:#2b6fba;transform:scaleX(0.9374);transform-origin:0 50%;">web-browsing</div>
<div class="b" style="left:216px;top:468.25px;width:940px;height:28.25px;background:#eff4f8;"></div>
<div class="b" style="left:242.5px;top:468.25px;width:2px;height:28.25px;background:#e4e8eb;"></div>
<div class="b" style="left:270.5px;top:468.25px;width:2px;height:28.25px;background:#e4e8eb;"></div>
<div class="b" style="left:366.5px;top:468.25px;width:2px;height:28.25px;background:#e4e8eb;"></div>
<div class="b" style="left:468px;top:468.25px;width:2px;height:28.25px;background:#e4e8eb;"></div>
<div class="b" style="left:533.7px;top:468.25px;width:2px;height:28.25px;background:#e4e8eb;"></div>
<div class="b" style="left:599.5px;top:468.25px;width:2px;height:28.25px;background:#e4e8eb;"></div>
<div class="b" style="left:913.5px;top:468.25px;width:2px;height:28.25px;background:#e4e8eb;"></div>
<div class="b" style="left:1014.4px;top:468.25px;width:2px;height:28.25px;background:#e4e8eb;"></div>
<div class="b" style="left:1059.5px;top:468.25px;width:2px;height:28.25px;background:#e4e8eb;"></div>
<svg style="left:215px;top:419px" width="5" height="8" viewBox="0 0 5 8"><path d="M4 1 L1 4 L4 7 Z" fill="#888"/></svg>
<div class="b" style="left:892.7px;top:154.6px;width:126.6px;height:55.6px;background:#fff;box-shadow:0 1px 4px rgba(0,0,0,0.35);border-radius:2px;"></div>
<div class="b" style="left:894.3px;top:157px;width:123.4px;height:23px;background:#e6f0f8;"></div>
<div class="b" style="left:896px;top:182.3px;width:120px;height:1px;background:#dedede;"></div>
<svg style="left:900.5px;top:162.5px" width="14" height="13" viewBox="0 0 14 13" fill="none" stroke="#7d7d7d" stroke-width="1"><rect x="0.5" y="0.5" width="13" height="12"/><path d="M0.5 3.2 H13.5 M7 0.5 V12.5"/></svg>
<div class="t" style="left:920.6px;top:160.6px;font-size:12px;line-height:18px;color:#333;transform:scaleX(0.8976);transform-origin:0 50%;">Columns</div>
<svg style="left:1007px;top:164.8px" width="6" height="10" viewBox="0 0 6 10" fill="none" stroke="#555" stroke-width="1.3"><path d="M0.8 0.8 L5 5 L0.8 9.2"/></svg>
<div class="t" style="left:920.6px;top:187.4px;font-size:12px;line-height:18px;color:#333;transform:scaleX(0.9163);transform-origin:0 50%;">Adjust Columns</div>
<div class="b" style="left:665.3px;top:12px;width:227.9px;height:462px;background:#fff;box-shadow:0 0 4px rgba(0,0,0,0.4);"></div>
<svg style="left:761px;top:18px" width="36" height="5" viewBox="0 0 36 5"><path d="M0.5 4.5 L4.5 0.5 H31.5 L35.5 4.5 Z" fill="#f3f3f3" stroke="#cfcfcf" stroke-width="0.8"/><path d="M15 4 L18 1 L21 4 Z" fill="#333"/></svg>
<svg style="left:673px;top:27.3px" width="13" height="13" viewBox="0 0 13 13"><rect x="0" y="0" width="13" height="13" rx="2" fill="#3a94d2"/><path d="M3 6.6 L5.5 9.2 L10.2 3.8" fill="none" stroke="#fff" stroke-width="1.7"/></svg>
<div class="t" style="left:693.5px;top:25.7px;font-size:12px;line-height:18px;color:#333;transform:scaleX(0.8777);transform-origin:0 50%;">Receive Time</div>
<svg style="left:673px;top:47.7px" width="13" height="13" viewBox="0 0 13 13"><rect x="0" y="0" width="13" height="13" rx="2" fill="#3a94d2"/><path d="M3 6.6 L5.5 9.2 L10.2 3.8" fill="none" stroke="#fff" stroke-width="1.7"/></svg>
<div class="t" style="left:693.5px;top:46.1px;font-size:12px;line-height:18px;color:#333;transform:scaleX(0.8649);transform-origin:0 50%;">Type</div>
<svg style="left:673px;top:68.2px" width="13" height="13" viewBox="0 0 13 13"><rect x="0" y="0" width="13" height="13" rx="2" fill="#3a94d2"/><path d="M3 6.6 L5.5 9.2 L10.2 3.8" fill="none" stroke="#fff" stroke-width="1.7"/></svg>
<div class="t" style="left:693.5px;top:66.6px;font-size:12px;line-height:18px;color:#333;transform:scaleX(0.8895);transform-origin:0 50%;">From Zone</div>
<svg style="left:673px;top:88.6px" width="13" height="13" viewBox="0 0 13 13"><rect x="0" y="0" width="13" height="13" rx="2" fill="#3a94d2"/><path d="M3 6.6 L5.5 9.2 L10.2 3.8" fill="none" stroke="#fff" stroke-width="1.7"/></svg>
<div class="t" style="left:693.5px;top:87.0px;font-size:12px;line-height:18px;color:#333;transform:scaleX(0.8833);transform-origin:0 50%;">To Zone</div>
<svg style="left:673px;top:109.0px" width="13" height="13" viewBox="0 0 13 13"><rect x="0" y="0" width="13" height="13" rx="2" fill="#3a94d2"/><path d="M3 6.6 L5.5 9.2 L10.2 3.8" fill="none" stroke="#fff" stroke-width="1.7"/></svg>
<div class="t" style="left:693.5px;top:107.4px;font-size:12px;line-height:18px;color:#333;transform:scaleX(0.8679);transform-origin:0 50%;">Source</div>
<svg style="left:673px;top:129.5px" width="13" height="13" viewBox="0 0 13 13"><rect x="0" y="0" width="13" height="13" rx="2" fill="#3a94d2"/><path d="M3 6.6 L5.5 9.2 L10.2 3.8" fill="none" stroke="#fff" stroke-width="1.7"/></svg>
<div class="t" style="left:693.5px;top:127.8px;font-size:12px;line-height:18px;color:#333;transform:scaleX(0.8727);transform-origin:0 50%;">Source User</div>
<svg style="left:673px;top:149.9px" width="13" height="13" viewBox="0 0 13 13"><rect x="0.5" y="0.5" width="12" height="12" rx="2" fill="#fff" stroke="#cfcfcf"/></svg>
<div class="t" style="left:693.5px;top:148.3px;font-size:12px;line-height:18px;color:#333;transform:scaleX(0.8984);transform-origin:0 50%;">Source Dynamic Address Group</div>
<div class="b" style="left:665.3px;top:166.8px;width:227.9px;height:20.4px;background:#e6f0f8;"></div>
<svg style="left:673px;top:170.3px" width="13" height="13" viewBox="0 0 13 13"><rect x="0" y="0" width="13" height="13" rx="2" fill="#3a94d2"/><path d="M3 6.6 L5.5 9.2 L10.2 3.8" fill="none" stroke="#fff" stroke-width="1.7"/></svg>
<div class="t" style="left:693.5px;top:168.7px;font-size:12px;line-height:18px;color:#2b6fba;transform:scaleX(0.9035);transform-origin:0 50%;">X-Forwarded-For IP</div>
<svg style="left:673px;top:190.7px" width="13" height="13" viewBox="0 0 13 13"><rect x="0" y="0" width="13" height="13" rx="2" fill="#3a94d2"/><path d="M3 6.6 L5.5 9.2 L10.2 3.8" fill="none" stroke="#fff" stroke-width="1.7"/></svg>
<div class="t" style="left:693.5px;top:189.1px;font-size:12px;line-height:18px;color:#333;transform:scaleX(0.9361);transform-origin:0 50%;">Destination</div>
<svg style="left:673px;top:211.2px" width="13" height="13" viewBox="0 0 13 13"><rect x="0.5" y="0.5" width="12" height="12" rx="2" fill="#fff" stroke="#cfcfcf"/></svg>
<div class="t" style="left:693.5px;top:209.6px;font-size:12px;line-height:18px;color:#333;transform:scaleX(0.9151);transform-origin:0 50%;">Destination Dynamic Address Group</div>
<svg style="left:673px;top:231.6px" width="13" height="13" viewBox="0 0 13 13"><rect x="0.5" y="0.5" width="12" height="12" rx="2" fill="#fff" stroke="#cfcfcf"/></svg>
<div class="t" style="left:693.5px;top:230.0px;font-size:12px;line-height:18px;color:#333;transform:scaleX(0.9015);transform-origin:0 50%;">Dynamic User Group</div>
<svg style="left:673px;top:252.0px" width="13" height="13" viewBox="0 0 13 13"><rect x="0" y="0" width="13" height="13" rx="2" fill="#3a94d2"/><path d="M3 6.6 L5.5 9.2 L10.2 3.8" fill="none" stroke="#fff" stroke-width="1.7"/></svg>
<div class="t" style="left:693.5px;top:250.4px;font-size:12px;line-height:18px;color:#333;transform:scaleX(0.8944);transform-origin:0 50%;">To Port</div>
<svg style="left:673px;top:272.5px" width="13" height="13" viewBox="0 0 13 13"><rect x="0" y="0" width="13" height="13" rx="2" fill="#3a94d2"/><path d="M3 6.6 L5.5 9.2 L10.2 3.8" fill="none" stroke="#fff" stroke-width="1.7"/></svg>
<div class="t" style="left:693.5px;top:270.9px;font-size:12px;line-height:18px;color:#333;transform:scaleX(0.9369);transform-origin:0 50%;">Application</div>
<svg style="left:673px;top:292.9px" width="13" height="13" viewBox="0 0 13 13"><rect x="0" y="0" width="13" height="13" rx="2" fill="#3a94d2"/><path d="M3 6.6 L5.5 9.2 L10.2 3.8" fill="none" stroke="#fff" stroke-width="1.7"/></svg>
<div class="t" style="left:693.5px;top:291.3px;font-size:12px;line-height:18px;color:#333;transform:scaleX(0.9595);transform-origin:0 50%;">Action</div>
<svg style="left:673px;top:313.3px" width="13" height="13" viewBox="0 0 13 13"><rect x="0" y="0" width="13" height="13" rx="2" fill="#3a94d2"/><path d="M3 6.6 L5.5 9.2 L10.2 3.8" fill="none" stroke="#fff" stroke-width="1.7"/></svg>
<div class="t" style="left:693.5px;top:311.7px;font-size:12px;line-height:18px;color:#333;transform:scaleX(0.8509);transform-origin:0 50%;">Rule</div>
<svg style="left:673px;top:333.8px" width="13" height="13" viewBox="0 0 13 13"><rect x="0" y="0" width="13" height="13" rx="2" fill="#3a94d2"/><path d="M3 6.6 L5.5 9.2 L10.2 3.8" fill="none" stroke="#fff" stroke-width="1.7"/></svg>
<div class="t" style="left:693.5px;top:332.1px;font-size:12px;line-height:18px;color:#333;transform:scaleX(0.8655);transform-origin:0 50%;">Session End Reason</div>
<svg style="left:673px;top:354.2px" width="13" height="13" viewBox="0 0 13 13"><rect x="0" y="0" width="13" height="13" rx="2" fill="#3a94d2"/><path d="M3 6.6 L5.5 9.2 L10.2 3.8" fill="none" stroke="#fff" stroke-width="1.7"/></svg>
<div class="t" style="left:693.5px;top:352.6px;font-size:12px;line-height:18px;color:#333;transform:scaleX(0.9130);transform-origin:0 50%;">Bytes</div>
<svg style="left:673px;top:374.6px" width="13" height="13" viewBox="0 0 13 13"><rect x="0.5" y="0.5" width="12" height="12" rx="2" fill="#fff" stroke="#cfcfcf"/></svg>
<div class="t" style="left:693.5px;top:373.0px;font-size:12px;line-height:18px;color:#333;transform:scaleX(0.9116);transform-origin:0 50%;">HTTP/2 Connection Session ID</div>
<svg style="left:673px;top:395.0px" width="13" height="13" viewBox="0 0 13 13"><rect x="0.5" y="0.5" width="12" height="12" rx="2" fill="#fff" stroke="#cfcfcf"/></svg>
<div class="t" style="left:693.5px;top:393.4px;font-size:12px;line-height:18px;color:#333;transform:scaleX(0.9104);transform-origin:0 50%;">SDWAN Site Name</div>
<svg style="left:673px;top:415.5px" width="13" height="13" viewBox="0 0 13 13"><rect x="0.5" y="0.5" width="12" height="12" rx="2" fill="#fff" stroke="#cfcfcf"/></svg>
<div class="t" style="left:693.5px;top:413.9px;font-size:12px;line-height:18px;color:#333;transform:scaleX(0.9114);transform-origin:0 50%;">App Flap Count</div>
<svg style="left:673px;top:435.9px" width="13" height="13" viewBox="0 0 13 13"><rect x="0.5" y="0.5" width="12" height="12" rx="2" fill="#fff" stroke="#cfcfcf"/></svg>
<div class="t" style="left:693.5px;top:434.3px;font-size:12px;line-height:18px;color:#333;transform:scaleX(0.9033);transform-origin:0 50%;">SDWAN Policy Name</div>
<svg style="left:673px;top:456.3px" width="13" height="13" viewBox="0 0 13 13"><rect x="0.5" y="0.5" width="12" height="12" rx="2" fill="#fff" stroke="#cfcfcf"/></svg>
<div class="t" style="left:693.5px;top:454.7px;font-size:12px;line-height:18px;color:#333;transform:scaleX(0.9169);transform-origin:0 50%;">Action Source</div>
</div>
<div id="over">
<svg style="left:0;top:0" width="1180" height="484" viewBox="0 0 1180 484"><rect x="19.85" y="11.85" width="1135.7" height="460.3" fill="none" stroke="#5a5a5a" stroke-width="1.3"/></svg>
<svg style="left:0;top:0" width="1180" height="484" viewBox="0 0 1180 484"><defs><filter id="sh1" x="-30%" y="-30%" width="160%" height="160%"><feGaussianBlur in="SourceAlpha" stdDeviation="1.5"/><feOffset dx="0" dy="1"/><feComponentTransfer><feFuncA type="linear" slope="0.5"/></feComponentTransfer><feMerge><feMergeNode/><feMergeNode in="SourceGraphic"/></feMerge></filter></defs><g filter="url(#sh1)"><path d="M495.2 24.0 L486.3 34.8" stroke="#e73d25" stroke-width="2.4"/><polygon points="478.2,44.7 482.4,29.5 486.3,34.8 492.3,37.6" fill="#e73d25"/><circle cx="503.4" cy="13.9" r="14.15" fill="#e73d25" stroke="#fff" stroke-width="2.3"/></g><text x="503.4" y="19.1" text-anchor="middle" style="font-family:'Liberation Sans',sans-serif;font-weight:bold;font-size:14.5px" fill="#fff">1</text></svg>
<svg style="left:0;top:0" width="1180" height="484" viewBox="0 0 1180 484"><defs><filter id="sh2" x="-30%" y="-30%" width="160%" height="160%"><feGaussianBlur in="SourceAlpha" stdDeviation="1.5"/><feOffset dx="0" dy="1"/><feComponentTransfer><feFuncA type="linear" slope="0.5"/></feComponentTransfer><feMerge><feMergeNode/><feMergeNode in="SourceGraphic"/></feMerge></filter></defs><g filter="url(#sh2)"><path d="M135.8 107.3 L126.8 118.2" stroke="#e73d25" stroke-width="2.4"/><polygon points="118.6,128.1 122.9,112.9 126.8,118.2 132.7,121.1" fill="#e73d25"/><circle cx="144.1" cy="97.3" r="14.15" fill="#e73d25" stroke="#fff" stroke-width="2.3"/></g><text x="144.1" y="102.5" text-anchor="middle" style="font-family:'Liberation Sans',sans-serif;font-weight:bold;font-size:14.5px" fill="#fff">2</text></svg>
<svg style="left:0;top:0" width="1180" height="484" viewBox="0 0 1180 484"><defs><filter id="sh3" x="-30%" y="-30%" width="160%" height="160%"><feGaussianBlur in="SourceAlpha" stdDeviation="1.5"/><feOffset dx="0" dy="1"/><feComponentTransfer><feFuncA type="linear" slope="0.5"/></feComponentTransfer><feMerge><feMergeNode/><feMergeNode in="SourceGraphic"/></feMerge></filter></defs><g filter="url(#sh3)"><path d="M654.4 153.1 L663.4 163.8" stroke="#e73d25" stroke-width="2.4"/><polygon points="671.7,173.6 657.5,166.7 663.4,163.8 667.3,158.5" fill="#e73d25"/><circle cx="646" cy="143.2" r="14.15" fill="#e73d25" stroke="#fff" stroke-width="2.3"/></g><text x="646" y="148.4" text-anchor="middle" style="font-family:'Liberation Sans',sans-serif;font-weight:bold;font-size:14.5px" fill="#fff">3</text></svg>
</div>
</body></html>
